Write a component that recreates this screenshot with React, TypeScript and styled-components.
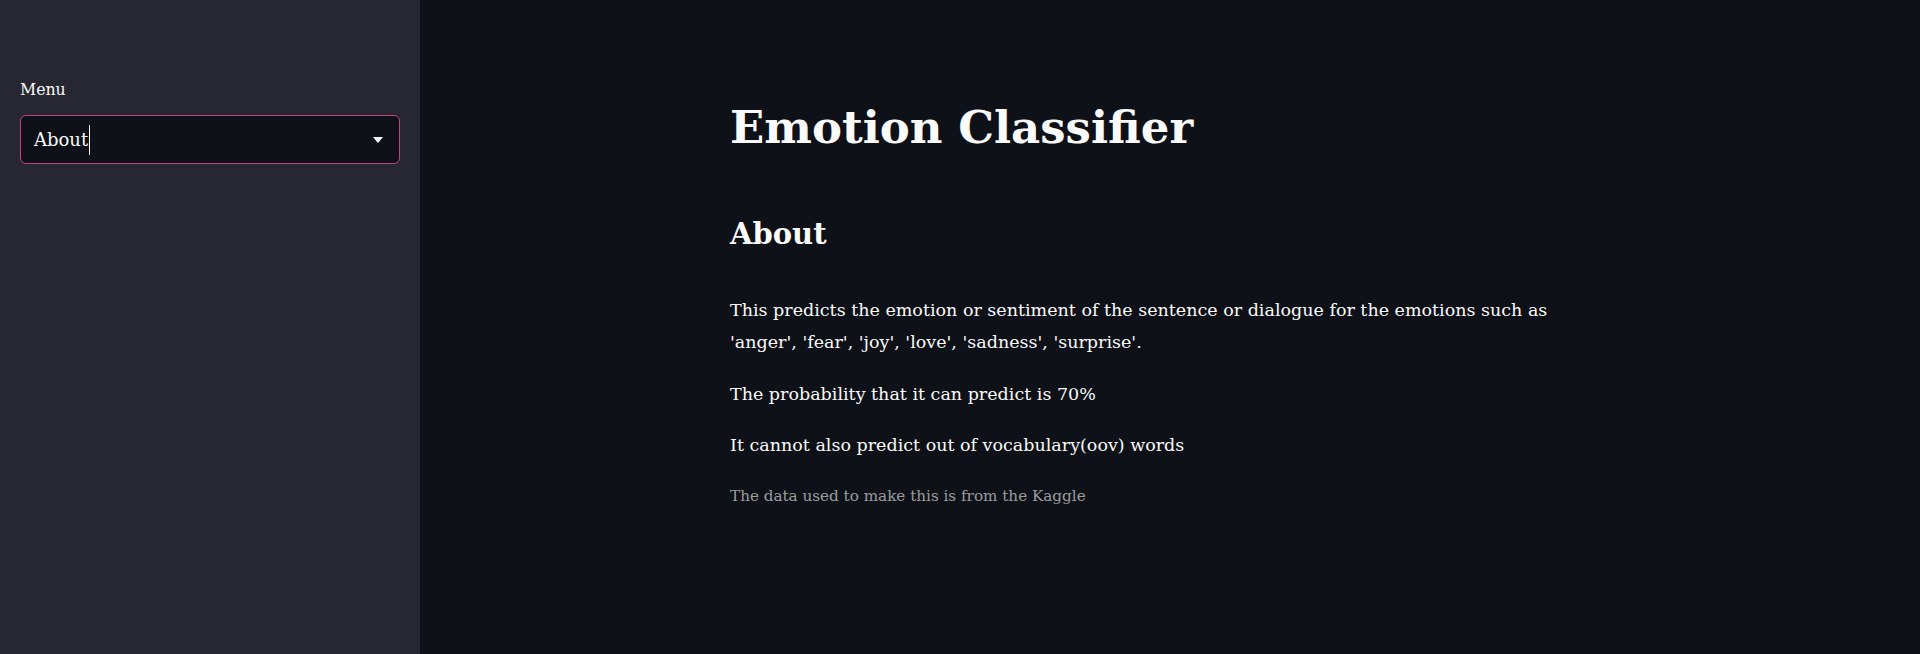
import React from "react";
import styled, { createGlobalStyle } from "styled-components";

const GlobalStyle = createGlobalStyle`
  html, body {
    margin: 0;
    padding: 0;
    background: #0e1117;
  }
  * { box-sizing: border-box; }
`;

const serif = `"DejaVu Serif", "Liberation Serif", serif`;

const Page = styled.div`
  display: flex;
  min-height: 654px;
  font-family: ${serif};
  color: #fafafa;
`;

const Sidebar = styled.aside`
  width: 420px;
  flex: 0 0 420px;
  background: #262730;
  padding: 76px 20px 0 20px;
  display: flex;
  flex-direction: column;
`;

const Label = styled.label`
  font-size: 15.75px;
  line-height: 28px;
  color: #fafafa;
  margin-bottom: 11px;
`;

const SelectBox = styled.div`
  height: 49px;
  width: 380px;
  border: 1px solid #c2437f;
  border-radius: 6px;
  background: #0e1117;
  display: flex;
  align-items: center;
  padding: 0 16px 0 13px;
`;

const SelectValue = styled.span`
  font-size: 18px;
  line-height: 32px;
  color: #fafafa;
  display: flex;
  align-items: center;
  flex: 1;
`;

const Caret = styled.span`
  display: inline-block;
  width: 1px;
  height: 30px;
  background: #fafafa;
  margin-left: 1px;
`;

const Arrow = styled.svg`
  width: 10px;
  height: 6px;
  flex: 0 0 auto;
`;

const Main = styled.main`
  flex: 1;
  display: flex;
  justify-content: center;
`;

const Content = styled.div`
  width: 920px;
  padding: 98px 20px 0 20px;
  display: flex;
  flex-direction: column;
`;

const Title = styled.h1`
  margin: 0;
  font-size: 45px;
  line-height: 60px;
  font-weight: 700;
`;

const Subtitle = styled.h2`
  margin: 56px 0 0 0;
  font-size: 29px;
  line-height: 41px;
  font-weight: 600;
`;

const Paragraph = styled.p<{ $gap: number }>`
  margin: ${(p) => p.$gap}px 0 0 0;
  font-size: 17.5px;
  line-height: 32px;
`;

const Caption = styled.p`
  margin: 21px 0 0 0;
  font-size: 15.2px;
  line-height: 28px;
  color: rgba(250, 250, 250, 0.6);
`;

export default function App() {
  return (
    <>
      <GlobalStyle />
      <Page>
        <Sidebar>
          <Label>Menu</Label>
          <SelectBox>
            <SelectValue>
              About
              <Caret />
            </SelectValue>
            <Arrow viewBox="0 0 10 6">
              <path d="M0 0 L10 0 L5 6 Z" fill="#fafafa" />
            </Arrow>
          </SelectBox>
        </Sidebar>
        <Main>
          <Content>
            <Title>Emotion Classifier</Title>
            <Subtitle>About</Subtitle>
            <Paragraph $gap={39}>
              This predicts the emotion or sentiment of the sentence or dialogue for the emotions such as 'anger', 'fear', 'joy', 'love', 'sadness', 'surprise'.
            </Paragraph>
            <Paragraph $gap={20}>The probability that it can predict is 70%</Paragraph>
            <Paragraph $gap={19}>It cannot also predict out of vocabulary(oov) words</Paragraph>
            <Caption>The data used to make this is from the Kaggle</Caption>
          </Content>
        </Main>
      </Page>
    </>
  );
}
